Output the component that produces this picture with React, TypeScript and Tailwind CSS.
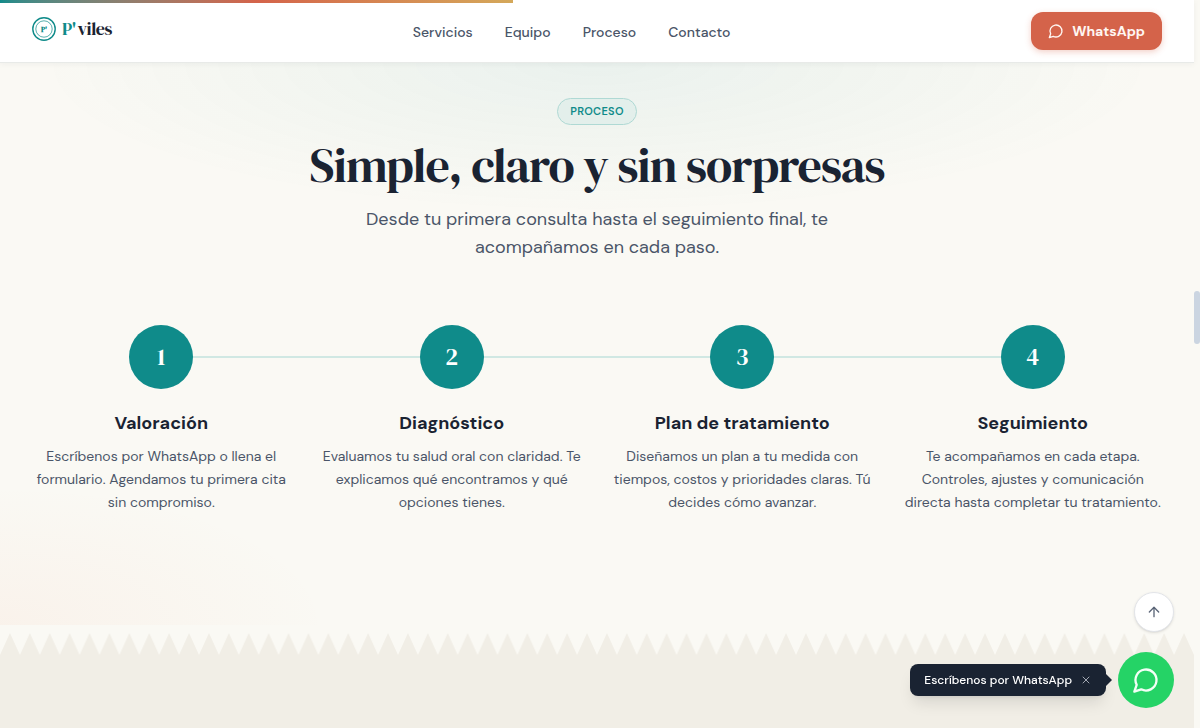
import { ArrowUp, X } from "lucide-react";

const navItems = ["Servicios", "Equipo", "Proceso", "Contacto"];

const steps = [
  {
    title: "Valoración",
    text: "Escríbenos por WhatsApp o llena el formulario. Agendamos tu primera cita sin compromiso.",
  },
  {
    title: "Diagnóstico",
    text: "Evaluamos tu salud oral con claridad. Te explicamos qué encontramos y qué opciones tienes.",
  },
  {
    title: "Plan de tratamiento",
    text: "Diseñamos un plan a tu medida con tiempos, costos y prioridades claras. Tú decides cómo avanzar.",
  },
  {
    title: "Seguimiento",
    text: "Te acompañamos en cada etapa. Controles, ajustes y comunicación directa hasta completar tu tratamiento.",
  },
];

const serif = "font-['DM_Serif_Display','Liberation_Serif',serif]";

function ChatBubble({ size }: { size: number }) {
  return (
    <svg
      width={size}
      height={size}
      viewBox="0 0 24 24"
      fill="none"
      stroke="currentColor"
      strokeWidth="2"
      strokeLinecap="round"
      strokeLinejoin="round"
      aria-hidden="true"
    >
      <path d="M7.9 20A9 9 0 1 0 4 16.1L2 22Z" />
    </svg>
  );
}

function Logo() {
  return (
    <a href="#inicio" className="flex items-center gap-1.5">
      <svg width="24" height="24" viewBox="0 0 24 24" fill="none" stroke="#0f8b8a" aria-hidden="true">
        <circle cx="12" cy="12" r="11.2" strokeWidth="1.4" />
        <circle cx="12" cy="12" r="8.2" strokeWidth="0.7" />
        <text x="12" y="14.6" textAnchor="middle" fontSize="7.5" fontWeight="700" fontFamily="DM Serif Display, Liberation Serif, serif" fill="#0f8b8a" stroke="none">
          P'
        </text>
      </svg>
      <span className={`${serif} flex gap-0.5 text-lg leading-6 tracking-tight text-[#1a2332]`}>
        <span className="text-[#0f8b8a]">P'</span>
        <span>viles</span>
      </span>
    </a>
  );
}

function Header() {
  return (
    <header className="relative z-10 border-b border-[#e8eae8] bg-white shadow-[0_1px_6px_rgba(26,35,50,0.05)]">
      <div className="absolute top-0 left-0 h-[3px] w-[43%] bg-linear-to-r from-[#0f8b8a] via-[#d4634a] to-[#d4a85a]" />
      <div className="flex items-center justify-between px-8 py-3">
        <div className="flex pb-1">
          <Logo />
        </div>
        <nav className="flex gap-8 pt-0.5 text-sm leading-5 font-medium text-[#4a5568]">
          {navItems.map((item) => (
            <a key={item} href={`#${item.toLowerCase()}`}>
              {item}
            </a>
          ))}
        </nav>
        <a
          href="#whatsapp"
          className="flex h-[38px] items-center gap-2 rounded-xl bg-[#d4634a] px-[17px] text-sm font-bold text-[#fff6f2] shadow-[0_2px_6px_rgba(212,99,74,0.3)]"
        >
          <ChatBubble size={16} />
          WhatsApp
        </a>
      </div>
    </header>
  );
}

function Process() {
  return (
    <section
      id="proceso"
      className="bg-[#faf9f4] bg-[radial-gradient(ellipse_560px_150px_at_50%_0%,rgba(15,139,138,0.065),transparent),radial-gradient(ellipse_330px_140px_at_0%_100%,rgba(240,120,70,0.05),transparent)] px-8 pt-[35px] pb-28"
    >
      <div className="flex flex-col items-center text-center">
        <span className="rounded-full border border-[#afd9d4] bg-[#e3efeb] px-3 py-1 text-[11px] leading-[17px] font-semibold tracking-wide text-[#0f8b8a]">
          PROCESO
        </span>
        <h2 className={`${serif} mt-3 text-[48px] leading-14 tracking-[-0.02em] text-[#1a2332]`}>
          Simple, claro y sin sorpresas
        </h2>
        <p className="mt-3 max-w-[500px] text-lg leading-7 text-[#4a5568]">
          Desde tu primera consulta hasta el seguimiento final, te acompañamos en cada paso.
        </p>
      </div>
      <ol className="mt-16 grid grid-cols-4 gap-8">
        {steps.map((step, index) => (
          <li key={step.title} className="relative flex flex-col items-center text-center">
            {index < steps.length - 1 && (
              <div className="absolute top-[31px] left-1/2 h-0.5 w-[calc(100%+32px)] bg-[#d0e8e3]" />
            )}
            <div
              className={`${serif} relative flex size-16 items-center justify-center rounded-full bg-[#0f8b8a] text-2xl text-white`}
            >
              {index + 1}
            </div>
            <h3 className="mt-5 text-lg leading-7 font-bold text-[#1a2332]">{step.title}</h3>
            <p className="mt-2 text-sm leading-relaxed text-[#4a5568]">{step.text}</p>
          </li>
        ))}
      </ol>
    </section>
  );
}

function Zigzag() {
  return (
    <svg className="block h-[30px] w-full bg-[#faf9f4]" aria-hidden="true">
      <defs>
        <pattern id="teeth" width="19.9" height="30" patternUnits="userSpaceOnUse">
          <path d="M0 30 L9.95 8 L19.9 30 Z" fill="#f1eee6" />
        </pattern>
      </defs>
      <rect width="100%" height="30" fill="url(#teeth)" />
    </svg>
  );
}

function FloatingActions() {
  return (
    <div className="fixed right-[26px] bottom-5 z-20 flex flex-col items-end gap-5">
      <button
        type="button"
        aria-label="Volver arriba"
        className="flex size-10 items-center justify-center rounded-full border border-[#e2e4e8] bg-white text-[#5b6577] shadow-sm"
      >
        <ArrowUp size={16} />
      </button>
      <div className="flex items-center gap-3">
        <div className="relative flex h-8 items-center gap-2 rounded-lg bg-[#1a2332] pr-3.5 pl-3.5 text-xs font-medium text-white shadow-lg">
          <span>Escríbenos por WhatsApp</span>
          <button type="button" aria-label="Cerrar" className="text-[#a3a8b3]">
            <X size={12} />
          </button>
          <span className="absolute top-1/2 left-full -translate-y-1/2 border-y-[6px] border-l-[6px] border-y-transparent border-l-[#1a2332]" />
        </div>
        <a
          href="#whatsapp"
          aria-label="Abrir WhatsApp"
          className="flex size-14 items-center justify-center rounded-full bg-[#25d366] text-[#f2fff6]"
        >
          <ChatBubble size={28} />
        </a>
      </div>
    </div>
  );
}

export default function App() {
  return (
    <div className="flex min-h-screen bg-[#faf9f4] font-['DM_Sans','Inter',sans-serif]">
      <main className="flex min-w-0 flex-1 flex-col">
        <Header />
        <Process />
        <Zigzag />
        <div className="flex-1 bg-[#f1eee6]" />
      </main>
      <div className="w-1.5 shrink-0" />
      <div className="fixed top-[40%] right-0 h-[53px] w-1.5 rounded-full bg-[#cbd5e1]" />
      <FloatingActions />
    </div>
  );
}
